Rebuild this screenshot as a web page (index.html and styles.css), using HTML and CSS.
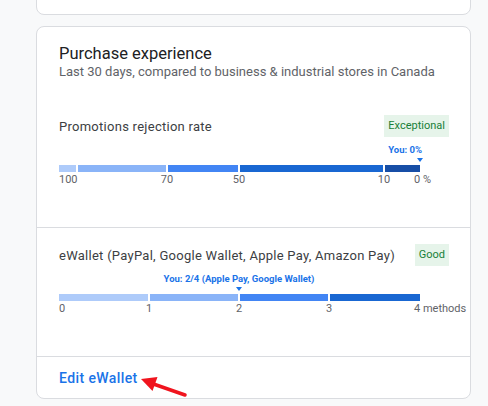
FILE: index.html
```html
<!DOCTYPE html>
<html lang="en">
<head>
    <meta charset="UTF-8">
    <meta name="viewport" content="width=device-width, initial-scale=1.0">
    <title>Purchase experience</title>
    <link rel="stylesheet" href="styles.css">
</head>
<body>
    <div class="page">
        <!-- Carte précédente, coupée en haut -->
        <div class="card card-prev"></div>

        <div class="card">
            <div class="card-head">
                <h2 class="card-title">Purchase experience</h2>
                <p class="card-sub">Last 30 days, compared to business &amp; industrial stores in Canada</p>
            </div>

            <!-- Taux de rejet des promotions -->
            <div class="metric metric-first">
                <div class="metric-row">
                    <span class="metric-name">Promotions rejection rate</span>
                    <span class="badge">Exceptional</span>
                </div>
                <div class="scale">
                    <div class="marker">
                        <span class="marker-label marker-label-end">You: 0%</span>
                        <span class="marker-arrow" style="left: 361px"></span>
                    </div>
                    <div class="bar">
                        <span class="seg seg-1" style="flex: 17"></span>
                        <span class="seg seg-2" style="flex: 88"></span>
                        <span class="seg seg-3" style="flex: 70"></span>
                        <span class="seg seg-4" style="flex: 143"></span>
                        <span class="seg seg-5" style="flex: 35"></span>
                    </div>
                    <div class="ticks">
                        <span class="tick tick-start">100</span>
                        <span class="tick" style="left: 108px">70</span>
                        <span class="tick" style="left: 180px">50</span>
                        <span class="tick" style="left: 325px">10</span>
                        <span class="tick tick-end">0 %</span>
                    </div>
                </div>
            </div>

            <!-- Portefeuilles électroniques -->
            <div class="metric">
                <div class="metric-row">
                    <span class="metric-name">eWallet (PayPal, Google Wallet, Apple Pay, Amazon Pay)</span>
                    <span class="badge">Good</span>
                </div>
                <div class="scale">
                    <div class="marker">
                        <span class="marker-label" style="left: 180px">You: 2/4 (Apple Pay, Google Wallet)</span>
                        <span class="marker-arrow" style="left: 180px"></span>
                    </div>
                    <div class="bar">
                        <span class="seg seg-1" style="flex: 89"></span>
                        <span class="seg seg-2" style="flex: 88"></span>
                        <span class="seg seg-3" style="flex: 88"></span>
                        <span class="seg seg-4" style="flex: 90"></span>
                    </div>
                    <div class="ticks">
                        <span class="tick tick-start">0</span>
                        <span class="tick" style="left: 90px">1</span>
                        <span class="tick" style="left: 180px">2</span>
                        <span class="tick" style="left: 270px">3</span>
                        <span class="tick tick-end">4 methods</span>
                    </div>
                </div>
            </div>

            <div class="card-foot">
                <a href="#" class="edit-link">Edit eWallet</a>
            </div>
        </div>
    </div>

    <!-- Flèche rouge d'annotation -->
    <svg class="annotation" viewBox="0 0 488 406" width="488" height="406">
        <line x1="185" y1="395" x2="152" y2="383.5" stroke="#f0141e" stroke-width="3.5" stroke-linecap="round"/>
        <polygon points="141,379 157.5,377 152.5,391" fill="#f0141e"/>
    </svg>
</body>
</html>
```

FILE: styles.css
```css
body {
    font-family: Roboto, "Noto Sans", Arial, sans-serif;
    background-color: #f8f9fa;
    margin: 0;
    width: 488px;
    height: 406px;
    overflow: hidden;
    position: relative;
}
.page {
    width: 435px;
    padding-left: 36px;
    display: flex;
    flex-direction: column;
    gap: 11px;
}
.card {
    background: #ffffff;
    border: 1px solid #dadce0;
    border-radius: 8px;
}
.card-prev {
    height: 38px;
    margin-top: -25px;
}
.card-head {
    padding: 17px 22px 0;
}
.card-title {
    margin: 0;
    font-size: 16.5px;
    line-height: 20px;
    font-weight: 400;
    color: #202124;
}
.card-sub {
    margin: 0;
    font-size: 13px;
    line-height: 16px;
    color: #5f6368;
}
.metric {
    padding: 16px 21px 40px 22px;
    border-top: 1px solid #dadce0;
}
.metric-first {
    padding-top: 35px;
    border-top: none;
}
.metric-row {
    display: flex;
    justify-content: space-between;
    align-items: center;
    height: 22px;
}
.metric-name {
    font-size: 13px;
    letter-spacing: 0.27px;
    color: #3c4043;
}
.badge {
    background-color: #e6f4ea;
    color: #188038;
    font-size: 11px;
    line-height: 22px;
    padding: 0 4px;
}
.scale {
    width: 361px;
}
.marker {
    position: relative;
    height: 18px;
    margin-top: 7px;
}
.marker-label {
    position: absolute;
    top: 0;
    transform: translateX(-50%);
    white-space: nowrap;
    font-size: 9.5px;
    line-height: 12px;
    font-weight: 700;
    color: #1a73e8;
}
.marker-label-end {
    left: auto;
    right: -2px;
    transform: none;
}
.marker-arrow {
    position: absolute;
    top: 14px;
    margin-left: -3px;
    width: 0;
    height: 0;
    border-left: 3px solid transparent;
    border-right: 3px solid transparent;
    border-top: 4px solid #1a73e8;
}
.bar {
    display: flex;
    gap: 2px;
    height: 7px;
    margin-top: 3px;
}
.seg {
    display: block;
}
.seg-1 { background-color: #aecbfa; }
.seg-2 { background-color: #8ab4f8; }
.seg-3 { background-color: #4285f4; }
.seg-4 { background-color: #1967d2; }
.seg-5 { background-color: #174ea6; }
.ticks {
    position: relative;
    height: 14px;
    margin-top: 1px;
}
.tick {
    position: absolute;
    top: 0;
    transform: translateX(-50%);
    white-space: nowrap;
    font-size: 11px;
    line-height: 14px;
    color: #5f6368;
}
.tick-start {
    left: 0;
    transform: none;
}
.tick-end {
    left: 100%;
    margin-left: -6px;
    transform: none;
}
.card-foot {
    border-top: 1px solid #dadce0;
    padding: 13px 22px 12px;
}
.edit-link {
    display: block;
    font-size: 14px;
    line-height: 16px;
    letter-spacing: 0.4px;
    font-weight: 500;
    color: #1a73e8;
    text-decoration: none;
}
.annotation {
    position: absolute;
    left: 0;
    top: 0;
    pointer-events: none;
}
```
